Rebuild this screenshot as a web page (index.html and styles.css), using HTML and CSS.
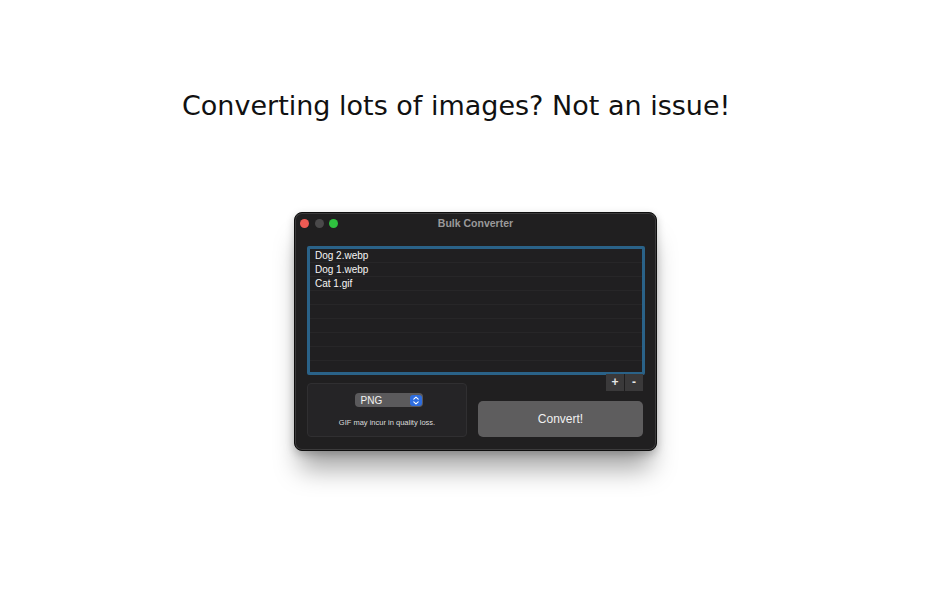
FILE: index.html
```html
<!DOCTYPE html>
<html>
<head>
<meta charset="utf-8">
<link rel="stylesheet" href="styles.css">
</head>
<body>
<div class="page">
  <h1 class="headline">Converting lots of images? Not an issue!</h1>
  <div class="window">
    <div class="titlebar">
      <div class="lights">
        <span class="light red"></span>
        <span class="light gray"></span>
        <span class="light green"></span>
      </div>
      <div class="title">Bulk Converter</div>
    </div>
    <div class="content">
      <div class="list">
        <div class="row">Dog 2.webp</div>
        <div class="row">Dog 1.webp</div>
        <div class="row">Cat 1.gif</div>
        <div class="row"></div>
        <div class="row"></div>
        <div class="row"></div>
        <div class="row"></div>
        <div class="row"></div>
      </div>
      <div class="bottom">
        <div class="options">
          <div class="popup">
            <span class="popup-label">PNG</span>
            <span class="popup-arrows">
              <svg width="12" height="11" viewBox="0 0 12 11"><path d="M3.8 4.2 L6 2.2 L8.2 4.2 M3.8 6.8 L6 8.8 L8.2 6.8" fill="none" stroke="#fff" stroke-width="1.1" stroke-linecap="round" stroke-linejoin="round"/></svg>
            </span>
          </div>
          <div class="caption">GIF may incur in quality loss.</div>
        </div>
        <div class="actions">
          <div class="pm">
            <span class="pm-btn">+</span>
            <span class="pm-btn">-</span>
          </div>
          <div class="convert">Convert!</div>
        </div>
      </div>
    </div>
  </div>
</div>
</body>
</html>
```
FILE: styles.css
```css
html, body {
  margin: 0;
  padding: 0;
  background: #ffffff;
}
.page {
  display: flex;
  flex-direction: column;
  align-items: flex-start;
  padding-top: 90px;
  padding-bottom: 120px;
}
.headline {
  margin: 0 0 0 182px;
  font-family: "DejaVu Sans", sans-serif;
  font-weight: normal;
  font-size: 27px;
  line-height: 31px;
  color: #111;
}
.window {
  margin: 91px 0 0 294px;
  width: 363px;
  height: 239px;
  box-sizing: border-box;
  background: #201f20;
  border-radius: 8px;
  border: 1px solid #0e0e0e;
  box-shadow: inset 0 0 0 1px #3c3b3c, 0 24px 26px -6px rgba(0,0,0,0.35), 0 3px 8px rgba(0,0,0,0.22);
  font-family: "Liberation Sans", Arial, sans-serif;
  display: flex;
  flex-direction: column;
}
.titlebar {
  position: relative;
  height: 18px;
  display: flex;
  align-items: center;
  justify-content: center;
  margin-top: 1px;
}
.lights {
  position: absolute;
  left: 5px;
  top: 5px;
  display: flex;
  gap: 5.5px;
}
.light {
  width: 9px;
  height: 9px;
  border-radius: 50%;
  display: block;
}
.red { background: #ee5b54; }
.gray { background: #4a494a; }
.green { background: #2fc13f; }
.title {
  font-size: 10.5px;
  font-weight: bold;
  color: #9a999a;
}
.content {
  padding: 14px 11px 0 12px;
  display: flex;
  flex-direction: column;
}
.list {
  height: 129px;
  box-sizing: border-box;
  border: 3px solid #2a6288;
  border-radius: 2px;
  background: #201f21;
  overflow: hidden;
}
.row {
  height: 14px;
  box-sizing: border-box;
  border-bottom: 1px solid #272628;
  padding-left: 5px;
  font-size: 10px;
  line-height: 14px;
  color: #f6f6f6;
}
.bottom {
  display: flex;
  align-items: flex-end;
  margin-top: -1px;
  gap: 11px;
}
.options {
  width: 160px;
  height: 54px;
  box-sizing: border-box;
  background: #252426;
  border: 1px solid #302f31;
  border-radius: 4px;
  display: flex;
  flex-direction: column;
  align-items: center;
  padding-top: 9px;
}
.popup {
  width: 68px;
  height: 14px;
  box-sizing: border-box;
  background: #5b5a5c;
  border-radius: 4px;
  display: flex;
  align-items: center;
  justify-content: space-between;
  padding: 0 1px 0 6px;
  margin-left: 3px;
}
.popup-label {
  font-size: 10px;
  color: #f2f2f2;
}
.popup-arrows {
  width: 12px;
  height: 11px;
  background: #2e6ddf;
  border-radius: 3px;
  display: flex;
}
.caption {
  margin-top: 11px;
  font-size: 7.5px;
  color: #dcdcdc;
}
.actions {
  display: flex;
  flex-direction: column;
  align-items: flex-end;
  gap: 10px;
}
.pm {
  display: flex;
  gap: 1px;
  background: #1f1e1f;
  margin-right: 2px;
}
.pm-btn {
  width: 18px;
  height: 17px;
  background: #3a393a;
  color: #e6e6e6;
  font-size: 12px;
  font-weight: bold;
  line-height: 17px;
  text-align: center;
}
.convert {
  width: 165px;
  height: 36px;
  background: #5e5d5e;
  border-radius: 5px;
  color: #f0f0f0;
  font-size: 12px;
  display: flex;
  align-items: center;
  justify-content: center;
  margin-right: 2px;
}
```
